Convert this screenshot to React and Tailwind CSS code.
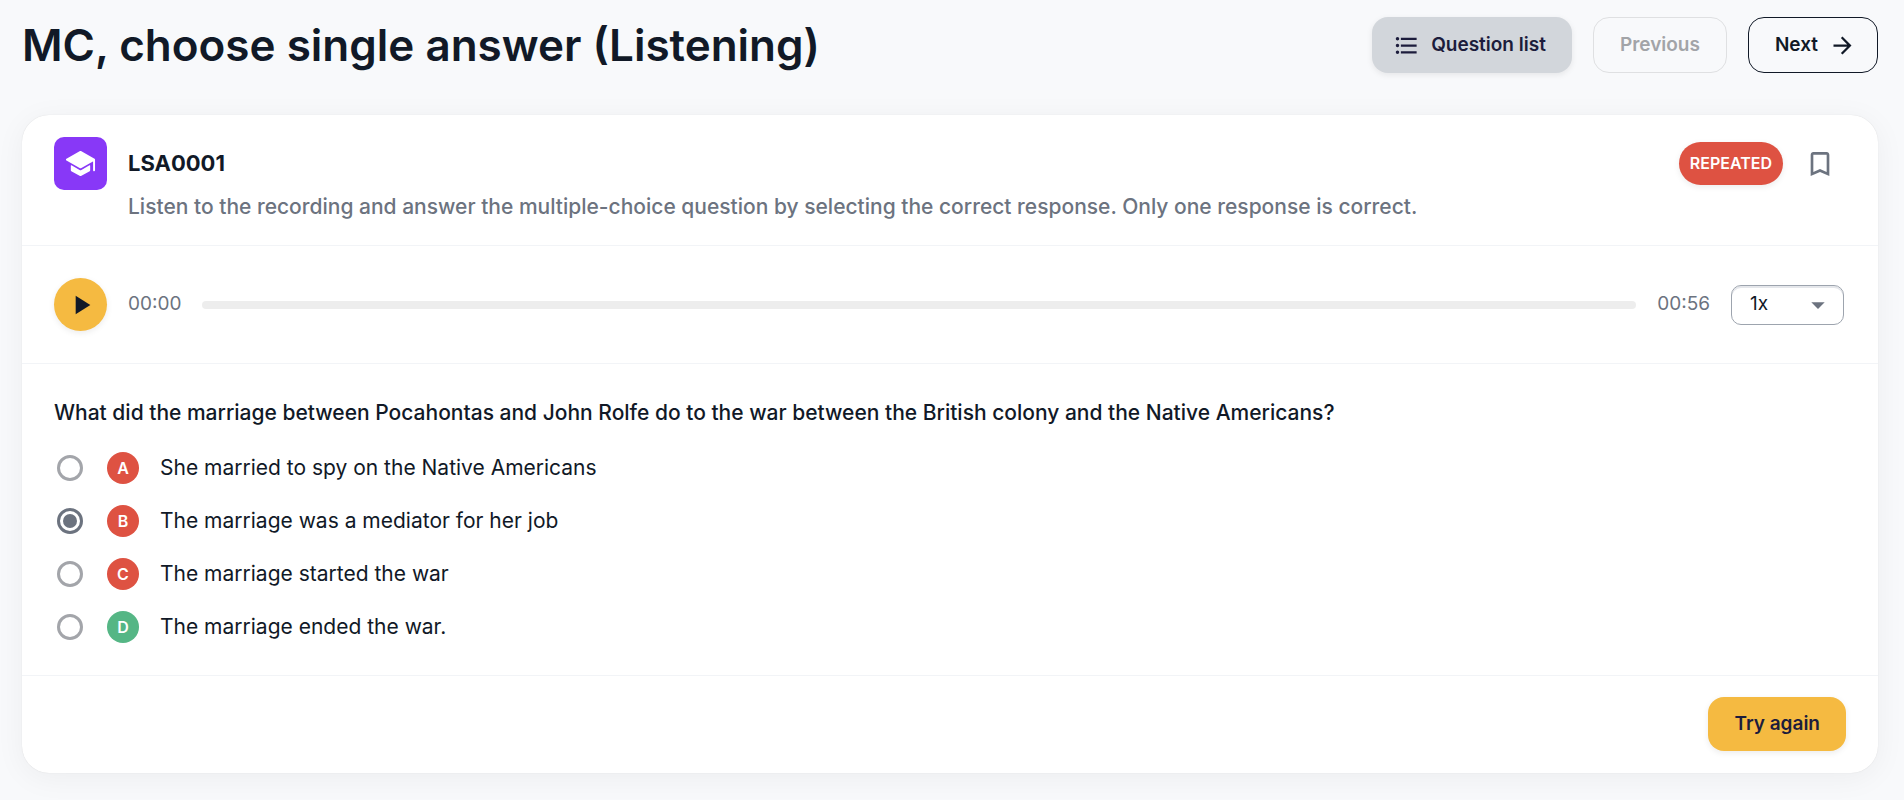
import { useState } from 'react';
import { IoSchool } from 'react-icons/io5';
import { MdArrowDropDown, MdArrowForward, MdBookmarkBorder, MdFormatListBulleted, MdPlayArrow } from 'react-icons/md';

const options = [
    { letter: 'A', text: 'She married to spy on the Native Americans', correct: false },
    { letter: 'B', text: 'The marriage was a mediator for her job', correct: false },
    { letter: 'C', text: 'The marriage started the war', correct: false },
    { letter: 'D', text: 'The marriage ended the war.', correct: true },
];

const PageHeader = () => (
    <header className="flex items-center justify-between">
        <h1 className="text-[44px] leading-[56px] font-semibold">MC, choose single answer (Listening)</h1>
        <div className="flex gap-[21px] text-[19px] font-semibold">
            <button className="flex h-14 items-center gap-[11px] rounded-2xl bg-[#d2d6db] pr-[26px] pl-[21px] text-[#1c1c3c] shadow-[0_2px_6px_rgba(0,0,0,0.08)]">
                <MdFormatListBulleted size={27} /> Question list
            </button>
            <button disabled className="h-14 rounded-2xl border border-[#dfe0e2] px-[26px] text-[#a2a4a8]">
                Previous
            </button>
            <button className="flex h-14 items-center gap-[11px] rounded-2xl border border-[#111927] pr-[21px] pl-[26px]">
                Next <MdArrowForward size={27} />
            </button>
        </div>
    </header>
);

const QuestionInfo = () => (
    <section className="flex items-start gap-[21px] border-b border-[#f2f4f7] px-8 pt-[22px] pb-[21px]">
        <div className="flex size-[53px] shrink-0 items-center justify-center rounded-[10px] bg-[#8838f7] text-white">
            <IoSchool size={31} />
        </div>
        <div className="flex-1">
            <h2 className="text-[22px] leading-[53px] font-bold">LSA0001</h2>
            <p className="text-[21px] leading-[34px] font-medium text-[#6c737f]">
                Listen to the recording and answer the multiple-choice question by selecting the correct response. Only one response is correct.
            </p>
        </div>
        <div className="flex h-[53px] items-center gap-[10px]">
            <span className="rounded-full bg-[#de5242] px-[11px] text-base leading-[43px] font-semibold text-white shadow-[0_2px_6px_rgba(0,0,0,0.08)]">
                REPEATED
            </span>
            <button aria-label="Bookmark" className="flex size-[53px] items-center justify-center text-[#6c737f]">
                <MdBookmarkBorder size={32} />
            </button>
        </div>
    </section>
);

const AudioPlayer = () => (
    <section className="flex items-center gap-[21px] border-b border-[#f2f4f7] py-8 pr-[34px] pl-8 text-[19px] text-[#6c737f]">
        <button
            aria-label="Play"
            className="flex size-[53px] shrink-0 items-center justify-center rounded-full bg-[#f5ba41] text-[#111927] shadow-[0_2px_6px_rgba(0,0,0,0.08)]"
        >
            <MdPlayArrow size={32} />
        </button>
        <span>00:00</span>
        <input
            type="range"
            aria-label="Position"
            min="0"
            max="56"
            defaultValue="0"
            className="h-2 min-w-0 flex-1 appearance-none rounded-sm bg-[#ededed] [&::-webkit-slider-thumb]:appearance-none"
        />
        <span>00:56</span>
        <div className="relative">
            <select
                aria-label="Speed"
                className="h-10 w-[113px] appearance-none rounded-[10px] border border-[#9da4ae] bg-white pl-[18px] text-[#111927] shadow-[inset_0_2px_0_#e5e7eb]"
            >
                <option>1x</option>
                <option>1.5x</option>
                <option>2x</option>
            </select>
            <MdArrowDropDown size={32} className="pointer-events-none absolute top-1 right-[10px]" />
        </div>
    </section>
);

const AnswerList = () => {
    const [selected, setSelected] = useState('B');

    return (
        <fieldset className="border-b border-[#f2f4f7] px-8 pt-8 pb-[22px]">
            <legend className="float-left w-full text-[21px] leading-[34px] font-medium">
                What did the marriage between Pocahontas and John Rolfe do to the war between the British colony and the Native Americans?
            </legend>
            <div className="clear-both pt-[11px]">
                {options.map(({ letter, text, correct }) => (
                    <label key={letter} className="flex h-[53px] items-center gap-[21px] text-[21px]">
                        <span className="flex items-center gap-6 pl-[3px]">
                            <input
                                type="radio"
                                name="answer"
                                checked={selected === letter}
                                onChange={() => setSelected(letter)}
                                className="size-[26px] appearance-none rounded-full border-3 border-[#a3a5aa] bg-clip-content p-[3px] checked:border-[#6c737f] checked:bg-[#6c737f]"
                            />
                            <span
                                className={`flex size-8 items-center justify-center rounded-full text-base font-semibold text-white ${
                                    correct ? 'bg-[#55b685]' : 'bg-[#de5242]'
                                }`}
                            >
                                {letter}
                            </span>
                        </span>
                        {text}
                    </label>
                ))}
            </div>
        </fieldset>
    );
};

export default function App() {
    return (
        <main className="min-h-screen bg-[#f8f9fb] pt-[17px] pr-[26px] pb-[26px] pl-[22px] font-['Inter',sans-serif] text-[#111927]">
            <PageHeader />
            <div className="mt-[42px] rounded-[27px] bg-white shadow-[0_0_1px_rgba(0,0,0,0.15),0_5px_30px_rgba(0,0,0,0.05)]">
                <QuestionInfo />
                <AudioPlayer />
                <AnswerList />
                <div className="flex justify-end px-8 pt-[21px] pb-[22px]">
                    <button className="h-[54px] rounded-2xl bg-[#f5ba41] px-[26px] text-[19px] font-semibold text-[#1c1c3c] shadow-[0_2px_6px_rgba(0,0,0,0.08)]">
                        Try again
                    </button>
                </div>
            </div>
        </main>
    );
}
